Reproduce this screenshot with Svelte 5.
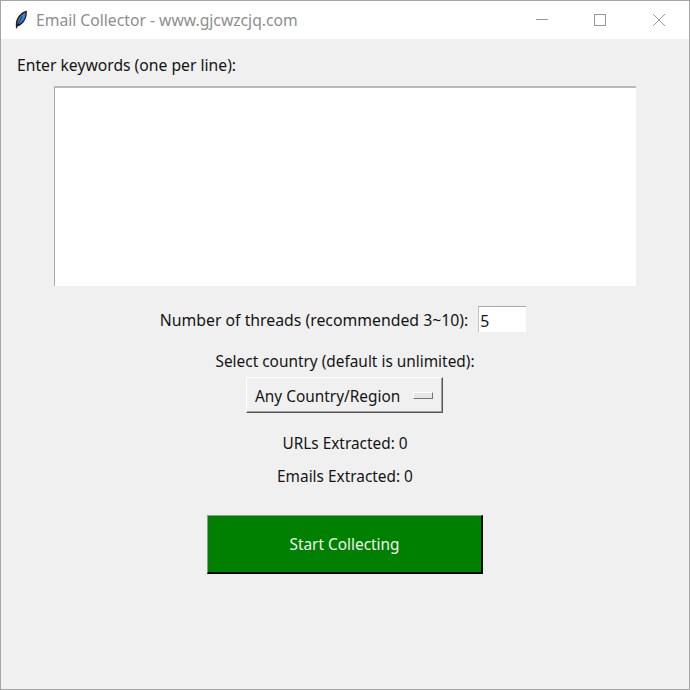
<script lang="ts">
	let keywords = $state('');
	let threads = $state('5');
	let urlCount = $state(0);
	let emailCount = $state(0);
</script>

<div class="window">
	<header class="titlebar">
		<svg class="feather" viewBox="0 0 14 20" width="14" height="20" aria-hidden="true">
			<path d="M2 19.5 L1.8 14 C2 8.5 6 2.5 12.6 0.6 C13.6 6 11.4 12.4 5.6 15.8 L3.2 16.2 Z" fill="#1d2028" />
			<path d="M3.4 13.8 C3.6 9.2 6.8 4.4 11.4 2.4 C11.9 6.8 9.6 11.4 5.2 14 Z" fill="#3f80d4" />
			<path d="M2.6 18 L8 6.5" stroke="#10131a" stroke-width="0.7" fill="none" />
		</svg>
		<span class="title">Email Collector - www.gjcwzcjq.com</span>
		<div class="controls">
			<svg viewBox="0 0 58 38" width="58" height="38" aria-hidden="true">
				<path d="M22 18.5 H34" stroke="#999" fill="none" />
			</svg>
			<svg viewBox="0 0 58 38" width="58" height="38" aria-hidden="true">
				<rect x="22.5" y="13.5" width="11" height="11" stroke="#999" fill="none" />
			</svg>
			<svg viewBox="0 0 58 38" width="58" height="38" aria-hidden="true">
				<path d="M23 13 L35 25 M35 13 L23 25" stroke="#999" fill="none" />
			</svg>
		</div>
	</header>

	<main class="content">
		<label class="keywords-label" for="keywords">Enter keywords (one per line):</label>
		<textarea id="keywords" class="keywords" bind:value={keywords}></textarea>

		<div class="threads-row">
			<label for="threads">Number of threads (recommended 3~10):</label>
			<input id="threads" class="threads" type="text" bind:value={threads} />
		</div>

		<div class="country-label">Select country (default is unlimited):</div>
		<button class="menu-button" type="button">
			<span class="menu-text">Any Country/Region</span>
			<span class="indicator"></span>
		</button>

		<div class="stat urls">URLs Extracted: {urlCount}</div>
		<div class="stat emails">Emails Extracted: {emailCount}</div>

		<button class="start" type="button">Start Collecting</button>
	</main>
</div>

<style>
	:global(body) {
		margin: 0;
		background: #f0f0f0;
	}
	.window {
		box-sizing: border-box;
		width: 690px;
		height: 690px;
		border: 1px solid #a6a6a6;
		background: #f0f0f0;
		font-family: "Noto Sans", "Open Sans", sans-serif;
		font-size: 15.4px;
		color: #141414;
		display: flex;
		flex-direction: column;
	}
	.titlebar {
		height: 38px;
		flex: none;
		background: #fff;
		display: flex;
		align-items: center;
		padding-left: 13px;
	}
	.feather {
		flex: none;
	}
	.title {
		margin-left: 8px;
		color: #8e8e8e;
		font-size: 15.7px;
	}
	.controls {
		margin-left: auto;
		display: flex;
		margin-right: 1px;
	}
	.controls svg {
		display: block;
	}
	.content {
		flex: 1;
		display: flex;
		flex-direction: column;
		align-items: center;
	}
	.keywords-label {
		align-self: flex-start;
		margin: 15px 0 0 16px;
		line-height: 22px;
		font-size: 15.7px;
	}
	.keywords {
		box-sizing: border-box;
		width: 582px;
		height: 200px;
		margin: 10px 0 0;
		padding: 2px;
		background: #fff;
		border: none;
		border-top: 2px solid #b9b9b9;
		border-left: 1px solid #a8a8a8;
		border-radius: 0;
		outline: none;
		resize: none;
		display: block;
	}
	.threads-row {
		display: flex;
		align-items: center;
		gap: 10px;
		margin: 20px 4px 0 0;
		height: 26px;
		font-size: 15.8px;
	}
	.threads-row label {
		padding-top: 2px;
	}
	.threads {
		box-sizing: border-box;
		width: 48px;
		height: 26px;
		padding: 2px 1px 0;
		border: none;
		border-top: 1px solid #a9a9a9;
		border-left: 1px solid #c4c4c4;
		border-radius: 0;
		outline: none;
		background: #fff;
		font: inherit;
		color: inherit;
	}
	.country-label {
		margin-top: 19px;
		line-height: 22px;
	}
	.menu-button {
		box-sizing: border-box;
		width: 197px;
		height: 36px;
		margin: 4px 1px 0 0;
		padding: 0 9px 0 8px;
		display: flex;
		align-items: center;
		justify-content: space-between;
		background: #f0f0f0;
		border: 1px solid;
		border-color: #fff #555 #555 #fff;
		box-shadow: inset -1px -1px 0 #a0a0a0;
		font: inherit;
		color: inherit;
	}
	.menu-text {
		padding-top: 2px;
	}
	.indicator {
		width: 20px;
		height: 7px;
		box-sizing: border-box;
		border: 1px solid;
		border-color: #fff #777 #777 #fff;
		background: #e6e6e6;
	}
	.stat {
		line-height: 22px;
	}
	.urls {
		margin-top: 20px;
	}
	.emails {
		margin-top: 11px;
	}
	.start {
		box-sizing: border-box;
		width: 276px;
		height: 59px;
		margin-top: 27px;
		padding-top: 2px;
		background: #008000;
		color: #f2f2f2;
		border: 1px solid;
		border-color: #6fb36f #000 #000 #6fb36f;
		border-width: 1px 2px 2px 1px;
		font: inherit;
	}
</style>
